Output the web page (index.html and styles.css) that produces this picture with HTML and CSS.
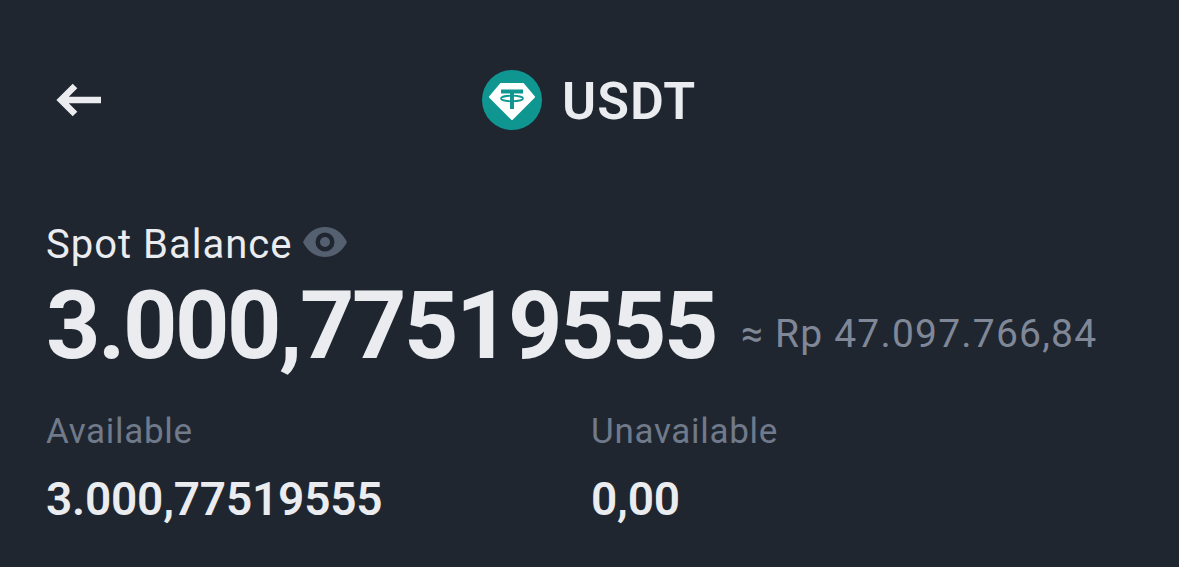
FILE: index.html
```html
<!DOCTYPE html>
<html>
<head>
    <title>USDT</title>
    <meta name="viewport" content="width=device-width, initial-scale=1.0">
    <link rel="stylesheet" href="styles.css">
</head>

<body>
    <div class="topbar">
        <svg class="back-icon" viewBox="0 0 46 36" width="46" height="36">
            <path d="M46 18H7M20 4 6 18 20 32" fill="none" stroke="#eaecef" stroke-width="6.500"/>
        </svg>
        <div class="coin">
            <svg class="coin-icon" viewBox="0 0 60 60" width="60" height="60">
                <circle cx="30" cy="30" r="30" fill="#0f9690"/>
                <path d="M19 14H41L52 27 30 49 8 27Z" fill="#fff" stroke="#fff" stroke-width="2" stroke-linejoin="round"/>
                <path d="M19 21.500H41M30 21.500V39" fill="none" stroke="#0f9690" stroke-width="4"/>
                <ellipse cx="30" cy="28.500" rx="11" ry="2.800" fill="none" stroke="#0f9690" stroke-width="1.800"/>
            </svg>
            <span class="coin-name">USDT</span>
        </div>
    </div>

    <div class="balance">
        <div class="balance-label">
            <span>Spot Balance</span>
            <svg class="eye-icon" viewBox="0 0 44 32" width="44" height="32">
                <path fill-rule="evenodd" d="M0 16C5 6 13 1 22 1S39 6 44 16C39 26 31 31 22 31S5 26 0 16ZM22 6.500A9.500 9.500 0 1 0 22 25.500 9.500 9.500 0 1 0 22 6.500ZM22 11A5 5 0 1 1 22 21 5 5 0 1 1 22 11Z" fill="#545f70"/>
            </svg>
        </div>
        <div class="balance-row">
            <span class="balance-value">3.000,77519555</span>
            <span class="balance-fiat">≈ Rp 47.097.766,84</span>
        </div>
    </div>

    <div class="details">
        <div class="detail">
            <div class="detail-label">Available</div>
            <div class="detail-value">3.000,77519555</div>
        </div>
        <div class="detail">
            <div class="detail-label">Unavailable</div>
            <div class="detail-value">0,00</div>
        </div>
    </div>
</body>
</html>
```

FILE: styles.css
```css
body {
    margin: 0;
    width: 1179px;
    height: 567px;
    overflow: hidden;
    background: #1f2630;
    color: #eaecef;
    font-family: Roboto, "Liberation Sans", sans-serif;
}

.topbar {
    display: flex;
    align-items: center;
    height: 60px;
    margin-top: 70px;
    padding-left: 55px;
}

.back-icon {
    margin-top: -1px;
}

.coin {
    display: flex;
    align-items: center;
    gap: 20px;
    margin-left: 381px;
}

.coin-name {
    padding-top: 3px;
    font-size: 52px;
    font-weight: 600;
    letter-spacing: 1px;
}

.balance {
    margin-top: 91px;
    padding-left: 46px;
}

.balance-label {
    display: flex;
    align-items: center;
    gap: 13px;
    height: 46px;
    font-size: 40px;
    letter-spacing: 1px;
}

.eye-icon {
    margin-top: -4px;
    margin-left: -2px;
}

.balance-row {
    display: flex;
    align-items: flex-end;
    gap: 25px;
    height: 94px;
    margin-top: 12px;
}

.balance-value {
    font-size: 95px;
    line-height: 94px;
    font-weight: 700;
    letter-spacing: -2.5px;
}

.balance-fiat {
    padding-bottom: 15px;
    font-size: 39px;
    line-height: 48px;
    color: #808898;
    letter-spacing: 1.2px;
}

.details {
    display: flex;
    margin-top: 39px;
    padding-left: 46px;
}

.detail {
    width: 545px;
}

.detail-label {
    font-size: 35px;
    line-height: 40px;
    color: #707a8a;
    letter-spacing: 0.7px;
}

.detail-value {
    margin-top: 24px;
    font-size: 46px;
    line-height: 46px;
    font-weight: 600;
    letter-spacing: -0.2px;
}
```
